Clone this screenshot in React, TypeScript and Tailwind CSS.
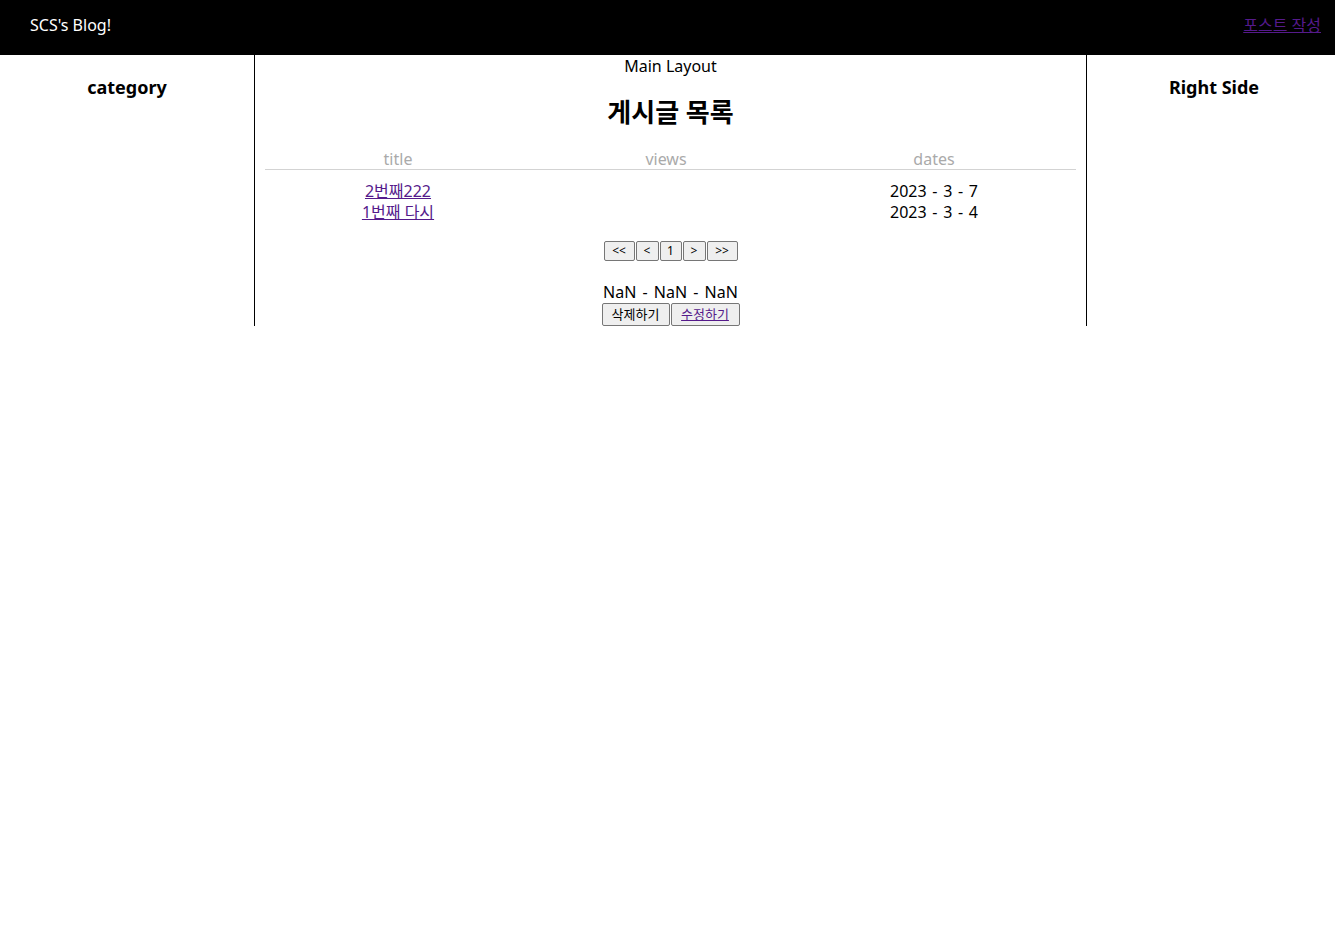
import { ReactNode } from 'react';

const POSTS = [
    { id: 2, title: '2번째222', views: '', date: '2023 - 3 - 7' },
    { id: 1, title: '1번째 다시', views: '', date: '2023 - 3 - 4' },
];

function NativeButton({ children, w }: { children: ReactNode; w: string }) {
    return (
        <button
            className={`${w} h-[20px] bg-[#efefef] border border-[#767676] rounded-[2px] text-[12px] leading-none text-black`}
        >
            {children}
        </button>
    );
}

export default function App() {
    return (
        <div className="min-h-[930px] bg-white text-black text-[16px] font-['Noto_Sans','Noto_Sans_CJK_KR',sans-serif]">
            {/* Header */}
            <header className='h-[55px] bg-black flex items-center justify-between pl-[30px] pr-[14px] pb-[6px]'>
                <span className='text-white text-[16px]'>SCS's Blog!</span>
                <a href='#' className='text-[#551a8b] underline text-[16px]'>
                    포스트 작성
                </a>
            </header>

            <div className='flex items-start'>
                {/* Left */}
                <aside className='w-[255px] self-stretch border-r border-black text-center'>
                    <h3 className='mt-[20px] text-[18px] font-bold leading-[24px]'>category</h3>
                </aside>

                {/* Main */}
                <main className='w-[832px] border-r border-black text-center'>
                    <div className='leading-[21px] pt-px'>Main Layout</div>
                    <h2 className='mt-[18px] mb-[20px] text-[26px] font-bold leading-[34px]'>게시글 목록</h2>

                    <div className='px-[10px]'>
                        <div className='grid grid-cols-[266px_270px_266px] border-b border-[#d3d3d3] text-[#aaaaaa] leading-[20px]'>
                            <div>title</div>
                            <div>views</div>
                            <div>dates</div>
                        </div>
                        <div className='pt-[11px]'>
                            {POSTS.map((p) => (
                                <div key={p.id} className='grid grid-cols-[266px_270px_266px] leading-[21px]'>
                                    <div>
                                        <a href='#' className='text-[#551a8b] underline'>
                                            {p.title}
                                        </a>
                                    </div>
                                    <div>{p.views}</div>
                                    <div className='[word-spacing:1.5px]'>{p.date}</div>
                                </div>
                            ))}
                        </div>
                    </div>

                    {/* Pagination */}
                    <div className='mt-[18px] flex justify-center gap-px'>
                        <NativeButton w='w-[31px]'>&lt;&lt;</NativeButton>
                        <NativeButton w='w-[23px]'>&lt;</NativeButton>
                        <NativeButton w='w-[22px]'>1</NativeButton>
                        <NativeButton w='w-[23px]'>&gt;</NativeButton>
                        <NativeButton w='w-[31px]'>&gt;&gt;</NativeButton>
                    </div>

                    <div className='mt-[21px] leading-[21px] [word-spacing:2px]'>NaN - NaN - NaN</div>
                    <div className='flex justify-center gap-px'>
                        <button className='w-[68px] h-[23px] bg-[#efefef] border border-[#767676] rounded-[2px] text-[13px] leading-none'>
                            삭제하기
                        </button>
                        <button className='w-[69px] h-[23px] bg-[#efefef] border border-[#767676] rounded-[2px] text-[13px] leading-none'>
                            <a href='#' className='text-[#551a8b] underline'>
                                수정하기
                            </a>
                        </button>
                    </div>
                </main>

                {/* Right */}
                <aside className='flex-1 text-center pl-[6px]'>
                    <h3 className='mt-[20px] text-[18px] font-bold leading-[24px]'>Right Side</h3>
                </aside>
            </div>
        </div>
    );
}
